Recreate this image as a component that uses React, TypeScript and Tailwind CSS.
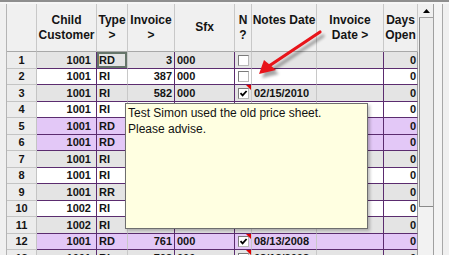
import React from 'react';

type Row = {
  n: string;
  c: string;
  t: string;
  inv: string;
  s: string;
  box?: boolean;
  chk?: boolean;
  red?: boolean;
  note: string;
  bg: string;
  h: string;
  sel?: boolean;
};

const G = 'bg-[#e4e4e4]';
const W = 'bg-white';
const P = 'bg-[#e3c8f7]';
const H1 = 'h-[17px]';
const H2 = 'h-[16px]';

const rows: Row[] = [
  { n: '1', c: '1001', t: 'RD', inv: '3', s: '000', box: true, note: '', bg: G, h: H1, sel: true },
  { n: '2', c: '1001', t: 'RI', inv: '387', s: '000', box: true, note: '', bg: W, h: H2 },
  { n: '3', c: '1001', t: 'RI', inv: '582', s: '000', box: true, chk: true, red: true, note: '02/15/2010', bg: G, h: H1 },
  { n: '4', c: '1001', t: 'RI', inv: '', s: '', note: '', bg: W, h: H2 },
  { n: '5', c: '1001', t: 'RD', inv: '', s: '', note: '', bg: P, h: H1 },
  { n: '6', c: '1001', t: 'RD', inv: '', s: '', note: '', bg: P, h: H2 },
  { n: '7', c: '1001', t: 'RI', inv: '', s: '', note: '', bg: G, h: H1 },
  { n: '8', c: '1001', t: 'RI', inv: '', s: '', note: '', bg: W, h: H2 },
  { n: '9', c: '1001', t: 'RR', inv: '', s: '', note: '', bg: G, h: H1 },
  { n: '10', c: '1002', t: 'RI', inv: '', s: '', note: '', bg: W, h: H2 },
  { n: '11', c: '1002', t: 'RI', inv: '', s: '', note: '', bg: G, h: H1 },
  { n: '12', c: '1001', t: 'RD', inv: '761', s: '000', box: true, chk: true, red: true, note: '08/13/2008', bg: P, h: H2 },
  { n: '13', c: '1001', t: 'RI', inv: '763', s: '000', box: true, chk: true, red: true, note: '08/13/2008', bg: G, h: H1 },
];

const GRID = 'grid grid-cols-[30px_60px_31px_47px_60px_17px_65px_67px_34px]';
const PB = 'border-b border-b-[#5b2c6f]';

function CheckBox({ checked }: { checked?: boolean }) {
  return (
    <div className="ml-[3px] w-[11px] h-[11px] bg-white border border-t-[#7a7a7a] border-l-[#7a7a7a] border-r-[#b8b8b8] border-b-[#b8b8b8] flex items-center justify-center">
      {checked && (
        <svg width="9" height="9" viewBox="0 0 9 9">
          <path d="M1.5 4.2 L3.6 6.4 L7.6 2" stroke="#000" strokeWidth="1.8" fill="none" />
        </svg>
      )}
    </div>
  );
}

function HeaderCell({ lines, last }: { lines: string[]; last?: boolean }) {
  return (
    <div
      className={`h-[48px] flex flex-col items-center justify-center text-center font-bold text-[12px] leading-[15px] bg-[#f0f0f0] border-b border-b-[#a8a8a8] ${
        last ? '' : 'border-r border-r-[#c8c8c8]'
      }`}
    >
      {lines.map((l, i) => (
        <div key={i} className="whitespace-nowrap">
          {l === '' ? '\u00a0' : l}
        </div>
      ))}
    </div>
  );
}

export default function App() {
  return (
    <div className="relative w-[449px] h-[255px] overflow-hidden bg-[#f0f0f0] font-['Liberation_Sans',Arial,sans-serif] text-[#141414]">
      <div className="h-[2px] bg-[#8e8e8e]" />
      <div className="h-[2px] bg-[#f6f6f6]" />
      <div className="flex">
        <div className="w-[7px] h-[251px] border-r border-r-[#b4b4b4] bg-[#f0f0f0]" />
        <div className="w-[411px] shrink-0">
          <div className={GRID}>
            <HeaderCell lines={['']} />
            <HeaderCell lines={['Child', 'Customer']} />
            <HeaderCell lines={['Type', '>']} />
            <HeaderCell lines={['Invoice', '>']} />
            <HeaderCell lines={['Sfx']} />
            <HeaderCell lines={['N', '?']} />
            <HeaderCell lines={['Notes Date', '']} />
            <HeaderCell lines={['Invoice', 'Date >']} />
            <HeaderCell lines={['Days', 'Open']} />
          </div>
          {rows.map((r) => (
            <div key={r.n} className={`${GRID} ${r.h} text-[11px] font-bold leading-none`}>
              <div className="bg-[#ececec] border-r border-r-[#c4c4c4] border-b border-b-[#c4c4c4] flex items-center justify-center">
                {r.n}
              </div>
              <div className={`${r.bg} ${PB} border-r border-r-[#5b2c6f] flex items-center justify-end pr-[5px]`}>
                {r.c}
              </div>
              <div
                className={`${r.bg} ${PB} border-r border-r-[#c8c8c8] flex items-center pl-[2px] ${
                  r.sel ? 'shadow-[inset_0_0_0_2px_#66756a]' : ''
                }`}
              >
                {r.t}
              </div>
              <div className={`${r.bg} ${PB} border-r border-r-[#5b2c6f] flex items-center justify-end pr-[2px]`}>
                {r.inv}
              </div>
              <div className={`${r.bg} ${PB} border-r border-r-[#5b2c6f] flex items-center pl-[2px]`}>{r.s}</div>
              <div className={`${r.bg} ${PB} border-r border-r-[#c8c8c8] relative flex items-center`}>
                {r.box && <CheckBox checked={r.chk} />}
                {r.red && (
                  <svg className="absolute top-0 right-0" width="5" height="5" viewBox="0 0 5 5">
                    <polygon points="0,0 5,0 5,5" fill="#e00000" />
                  </svg>
                )}
              </div>
              <div className={`${r.bg} ${PB} border-r border-r-[#c8c8c8] flex items-center pl-[2px]`}>{r.note}</div>
              <div className={`${r.bg} ${PB} border-r border-r-[#5b2c6f]`} />
              <div className={`${r.bg} ${PB} border-r border-r-[#9a9a9a] flex items-center justify-end pr-[1px]`}>0</div>
            </div>
          ))}
        </div>
        <div className="w-[16px] h-[251px] shrink-0 border-r border-r-[#a0a0a0] flex flex-col">
          <div className="h-[14px] ml-[1px] border-b border-b-[#a0a0a0] flex items-center justify-center">
            <svg width="7" height="4" viewBox="0 0 7 4">
              <polygon points="0,4 7,4 3.5,0" fill="#000" />
            </svg>
          </div>
          <div className="h-[189px] ml-[1px] border-l border-l-[#8a8a8a] border-b border-b-[#8a8a8a] bg-[#ececec]" />
          <div className="flex-1 bg-[#f2f2f2]" />
        </div>
        <div className="w-[8px] h-[251px] bg-[#f4f4f4]" />
        <div className="w-[1px] h-[251px] bg-[#a8a8a8]" />
        <div className="flex-1 h-[251px] bg-[#f0f0f0]" />
      </div>

      <div className="absolute left-[125px] top-[103px] w-[243px] h-[126px] bg-[#ffffe1] border border-[#6e6e6e] shadow-[2px_2px_3px_rgba(0,0,0,0.25)] px-[2px] pt-[1px] text-[12px] leading-[16px] font-normal text-[#111]">
        <div>Test Simon used the old price sheet.</div>
        <div>Please advise.</div>
      </div>

      <svg className="absolute left-0 top-0 pointer-events-none" width="449" height="255" viewBox="0 0 449 255">
        <defs>
          <filter id="sh" x="-20%" y="-20%" width="140%" height="140%">
            <feGaussianBlur stdDeviation="1.6" />
          </filter>
        </defs>
        <g transform="translate(3,4)" opacity="0.35" filter="url(#sh)">
          <line x1="320" y1="32" x2="269" y2="66" stroke="#000" strokeWidth="3.2" strokeLinecap="round" />
          <polygon points="259,74 264,60 276,70" fill="#000" />
        </g>
        <line x1="320" y1="32" x2="269" y2="66" stroke="#e8141a" strokeWidth="3.2" strokeLinecap="round" />
        <polygon points="259,74 264,60 276,70" fill="#e8141a" />
      </svg>
    </div>
  );
}
